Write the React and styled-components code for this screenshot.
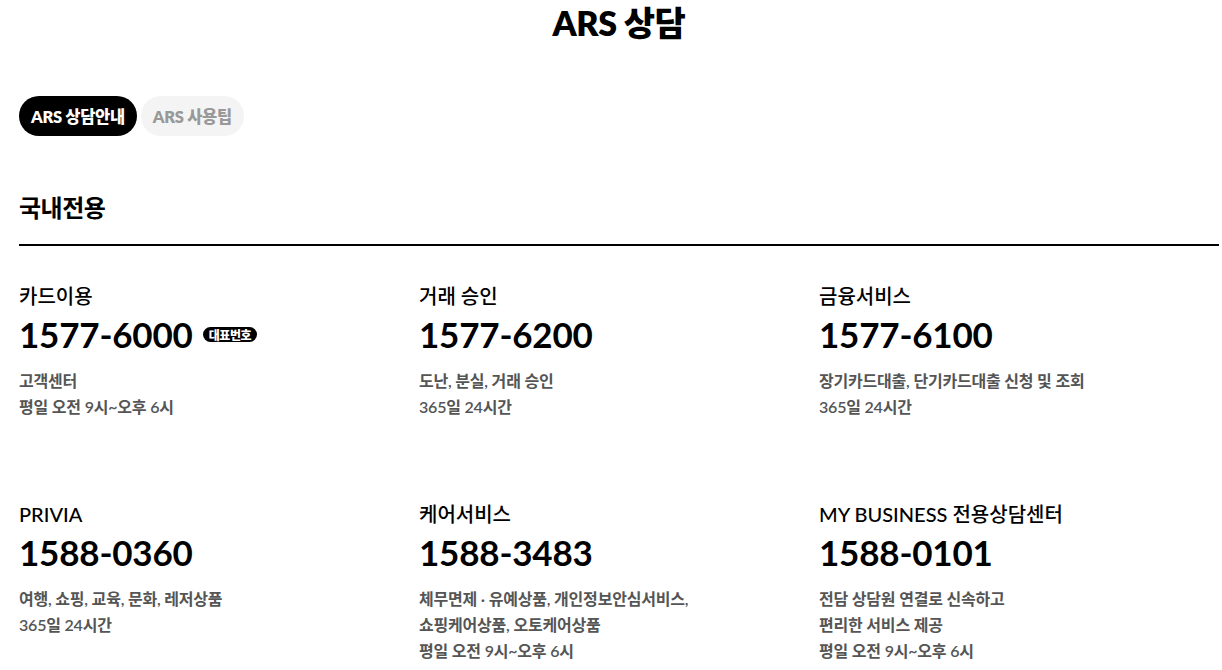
import React from 'react';
import styled, { createGlobalStyle } from 'styled-components';

const GlobalStyle = createGlobalStyle`
  body {
    margin: 0;
    background: #fff;
    font-family: Lato, "Noto Sans CJK KR", sans-serif;
    color: #000;
  }
`;

const Page = styled.div`
  width: 1200px;
  padding: 0 19px;
`;

const PageTitle = styled.h1`
  margin: 0;
  padding-top: 3px;
  height: 45px;
  text-align: center;
  font-size: 34px;
  font-weight: 800;
  line-height: 40px;
  letter-spacing: -0.5px;
`;

const Tabs = styled.div`
  display: flex;
  gap: 4px;
  margin-top: 48px;
`;

const Tab = styled.button`
  height: 40px;
  padding: 0 12px;
  border: 0;
  border-radius: 20px;
  font-family: Lato, "Noto Sans CJK KR", sans-serif;
  font-size: 16.5px;
  font-weight: 800;
  letter-spacing: -0.3px;
  background: ${p => (p.$active ? '#000' : '#f4f4f4')};
  color: ${p => (p.$active ? '#fff' : '#999')};
`;

const SectionTitle = styled.h2`
  margin: 56px 0 0;
  padding-bottom: 20px;
  font-size: 24px;
  font-weight: 700;
  line-height: 32px;
  letter-spacing: -0.5px;
  border-bottom: 2px solid #000;
`;

const Grid = styled.div`
  display: grid;
  grid-template-columns: repeat(3, 400px);
  row-gap: 81px;
  padding-top: 37px;
`;

const Item = styled.div`
  display: flex;
  flex-direction: column;
`;

const Label = styled.div`
  font-size: 20px;
  line-height: 26px;
  font-weight: 500;
`;

const NumberRow = styled.div`
  display: flex;
  align-items: center;
  gap: 10px;
  margin-top: 3px;
  height: 44px;
`;

const Phone = styled.span`
  font-family: Lato, sans-serif;
  font-size: 35px;
  font-weight: 700;
  letter-spacing: -0.2px;
  line-height: 44px;
`;

const Badge = styled.span`
  display: inline-flex;
  align-items: center;
  height: 15px;
  padding: 0 6px;
  margin-top: 1px;
  border-radius: 8px;
  background: #000;
  color: #fff;
  font-size: 12px;
  font-weight: 800;
  letter-spacing: -0.4px;
`;

const Desc = styled.p`
  margin: 12px 0 0;
  font-size: 16px;
  line-height: 26px;
  font-weight: 600;
  color: #555;
  letter-spacing: -0.2px;
`;

const items = [
  { label: '카드이용', phone: '1577-6000', badge: '대표번호', desc: ['고객센터', '평일 오전 9시~오후 6시'] },
  { label: '거래 승인', phone: '1577-6200', desc: ['도난, 분실, 거래 승인', '365일 24시간'] },
  { label: '금융서비스', phone: '1577-6100', desc: ['장기카드대출, 단기카드대출 신청 및 조회', '365일 24시간'] },
  { label: 'PRIVIA', phone: '1588-0360', desc: ['여행, 쇼핑, 교육, 문화, 레저상품', '365일 24시간'] },
  { label: '케어서비스', phone: '1588-3483', desc: ['체무면제 · 유예상품, 개인정보안심서비스,', '쇼핑케어상품, 오토케어상품', '평일 오전 9시~오후 6시'] },
  { label: 'MY BUSINESS 전용상담센터', phone: '1588-0101', desc: ['전담 상담원 연결로 신속하고', '편리한 서비스 제공', '평일 오전 9시~오후 6시'] },
];

export default function App() {
  return (
    <>
      <GlobalStyle />
      <Page>
        <PageTitle>ARS 상담</PageTitle>
        <Tabs>
          <Tab $active>ARS 상담안내</Tab>
          <Tab>ARS 사용팁</Tab>
        </Tabs>
        <SectionTitle>국내전용</SectionTitle>
        <Grid>
          {items.map(item => (
            <Item key={item.phone}>
              <Label>{item.label}</Label>
              <NumberRow>
                <Phone>{item.phone}</Phone>
                {item.badge && <Badge>{item.badge}</Badge>}
              </NumberRow>
              <Desc>
                {item.desc.map((line, i) => (
                  <React.Fragment key={i}>
                    {line}
                    {i < item.desc.length - 1 && <br />}
                  </React.Fragment>
                ))}
              </Desc>
            </Item>
          ))}
        </Grid>
      </Page>
    </>
  );
}
